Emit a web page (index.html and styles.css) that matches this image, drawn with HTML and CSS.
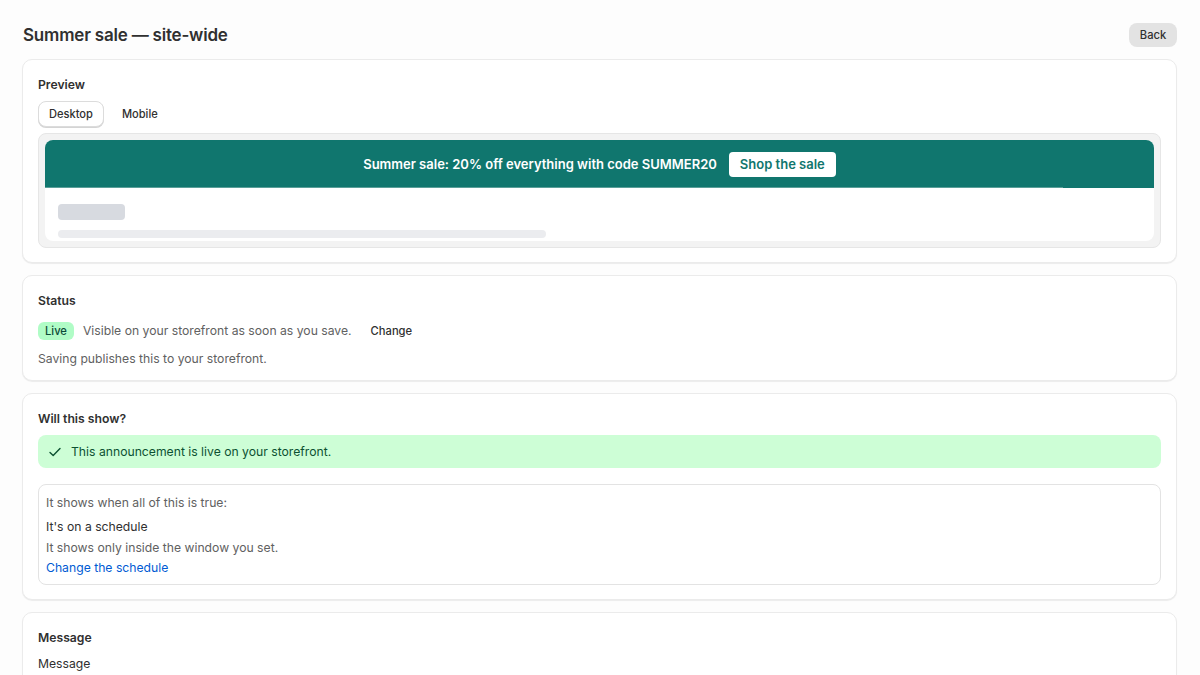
FILE: index.html
```html
<!DOCTYPE html>
<html lang="en">
  <head>
    <meta charset="UTF-8" />
    <meta name="viewport" content="width=device-width, initial-scale=1.0" />
    <title>Summer sale — site-wide</title>
    <link rel="stylesheet" href="styles.css">
  </head>
  <body>
    <main class="page">
      <header class="top">
        <h1 class="title">Summer sale — site-wide</h1>
        <button class="backBtn">Back</button>
      </header>

      <section class="card">
        <h2 class="cardTitle">Preview</h2>
        <div class="tabs">
          <button class="tab active">Desktop</button>
          <button class="tab">Mobile</button>
        </div>
        <div class="frame">
          <div class="shop">
            <div class="banner">
              <span class="bannerText">Summer sale: 20% off everything with code SUMMER20</span>
              <button class="bannerBtn">Shop the sale</button>
              <div class="bannerEdge"></div>
            </div>
            <div class="shopBody">
              <div class="skelBlock"></div>
              <div class="skelLine"></div>
            </div>
          </div>
        </div>
      </section>

      <section class="card">
        <h2 class="cardTitle">Status</h2>
        <div class="statusRow">
          <span class="badge">Live</span>
          <span class="muted">Visible on your storefront as soon as you save.</span>
          <button class="plainBtn">Change</button>
        </div>
        <p class="muted note">Saving publishes this to your storefront.</p>
      </section>

      <section class="card">
        <h2 class="cardTitle">Will this show?</h2>
        <div class="success">
          <svg class="check" width="14" height="14" viewBox="0 0 14 14" fill="none">
            <path d="M2 7.4l3.2 3.2L12 3.6" stroke="#0c5132" stroke-width="1.4" stroke-linecap="round" stroke-linejoin="round"/>
          </svg>
          <span>This announcement is live on your storefront.</span>
        </div>
        <div class="rules">
          <p class="muted rulesHead">It shows when all of this is true:</p>
          <p class="ruleName">It's on a schedule</p>
          <p class="muted ruleHint">It shows only inside the window you set.</p>
          <a class="link" href="#">Change the schedule</a>
        </div>
      </section>

      <section class="card">
        <h2 class="cardTitle">Message</h2>
        <p class="fieldLabel">Message</p>
      </section>
    </main>
  </body>
</html>
```

FILE: styles.css
```css
* {
  box-sizing: border-box;
}
body {
  margin: 0;
  background: #fdfdfd;
  color: #303030;
  font-family: Inter, "Noto Sans", sans-serif;
  font-size: 12.2px;
  line-height: 20px;
}
p,
h1,
h2 {
  margin: 0;
}
button {
  font-family: inherit;
  cursor: pointer;
}
.page {
  padding: 23px 23px 0 22px;
  display: flex;
  flex-direction: column;
  gap: 12px;
}
.top {
  display: flex;
  justify-content: space-between;
  align-items: center;
  height: 24px;
}
.title {
  font-size: 17px;
  font-weight: 600;
  letter-spacing: -0.2px;
  margin-left: 1px;
}
.backBtn {
  height: 24px;
  width: 48px;
  border: none;
  border-radius: 8px;
  background: #e3e3e3;
  color: #303030;
  font-size: 11.2px;
  font-weight: 500;
}
.card {
  background: #fff;
  border: 1px solid #ebebeb;
  border-radius: 10px;
  box-shadow: 0 1px 1px rgba(0, 0, 0, 0.07);
  padding: 16px 15px 14px;
}
.cardTitle {
  font-size: 12.2px;
  font-weight: 600;
  line-height: 18px;
}
.tabs {
  display: flex;
  gap: 7px;
  margin-top: 7px;
}
.tab {
  height: 26px;
  padding: 0 10px;
  border: 1px solid transparent;
  border-radius: 8px;
  background: none;
  color: #303030;
  font-size: 11.1px;
  font-weight: 500;
}
.tab.active {
  border-color: #dcdcdc;
  box-shadow: 0 1px 0 #d4d4d4;
  background: #fff;
}
.frame {
  margin-top: 6px;
  border: 1px solid #e6e6e6;
  border-radius: 8px;
  background: #f3f3f3;
  padding: 6px;
}
.shop {
  background: #fff;
  border-radius: 8px;
  overflow: hidden;
}
.banner {
  position: relative;
  height: 48px;
  background: #10766e;
  display: flex;
  justify-content: center;
  align-items: center;
  gap: 12px;
}
.bannerText {
  color: #fff;
  font-size: 13px;
  font-weight: 600;
}
.bannerBtn {
  height: 25px;
  padding: 0 11px;
  border: none;
  border-radius: 4px;
  background: #fff;
  color: #10766e;
  font-size: 13px;
  font-weight: 600;
}
.bannerEdge {
  position: absolute;
  left: 0;
  bottom: 0;
  width: 91.8%;
  height: 1px;
  background: #5a9f99;
}
.shopBody {
  padding: 16px 13px 3px;
}
.skelBlock {
  width: 67px;
  height: 16px;
  border-radius: 4px;
  background: #d7dae0;
}
.skelLine {
  width: 488px;
  height: 8px;
  margin-top: 10px;
  border-radius: 4px;
  background: #ebecef;
}
.statusRow {
  display: flex;
  align-items: center;
  height: 20px;
  margin-top: 11px;
}
.badge {
  height: 18px;
  line-height: 18px;
  padding: 0 7px;
  margin-right: 9px;
  border-radius: 6px;
  background: #b0fcc6;
  color: #0c4a38;
  font-size: 11.2px;
  font-weight: 500;
}
.muted {
  color: #616161;
}
.plainBtn {
  margin-left: 11px;
  padding: 0 8px;
  border: none;
  background: none;
  color: #303030;
  font-size: 11.2px;
  font-weight: 500;
}
.note {
  margin-top: 10px;
  line-height: 15px;
}
.success {
  display: flex;
  align-items: center;
  gap: 9px;
  height: 33px;
  margin-top: 7px;
  padding: 0 10px;
  border-radius: 8px;
  background: #cdfed6;
  color: #0c5132;
}
.rules {
  margin-top: 16px;
  border: 1px solid #e3e3e3;
  border-radius: 8px;
  padding: 8px 7px 6px;
  display: flex;
  flex-direction: column;
  align-items: flex-start;
}
.rulesHead {
  margin-bottom: 4px;
}
.ruleName {
  color: #303030;
}
.ruleHint {
  margin-top: 1px;
}
.link {
  color: #005bd3;
  text-decoration: none;
}
.fieldLabel {
  margin-top: 7px;
}
```
